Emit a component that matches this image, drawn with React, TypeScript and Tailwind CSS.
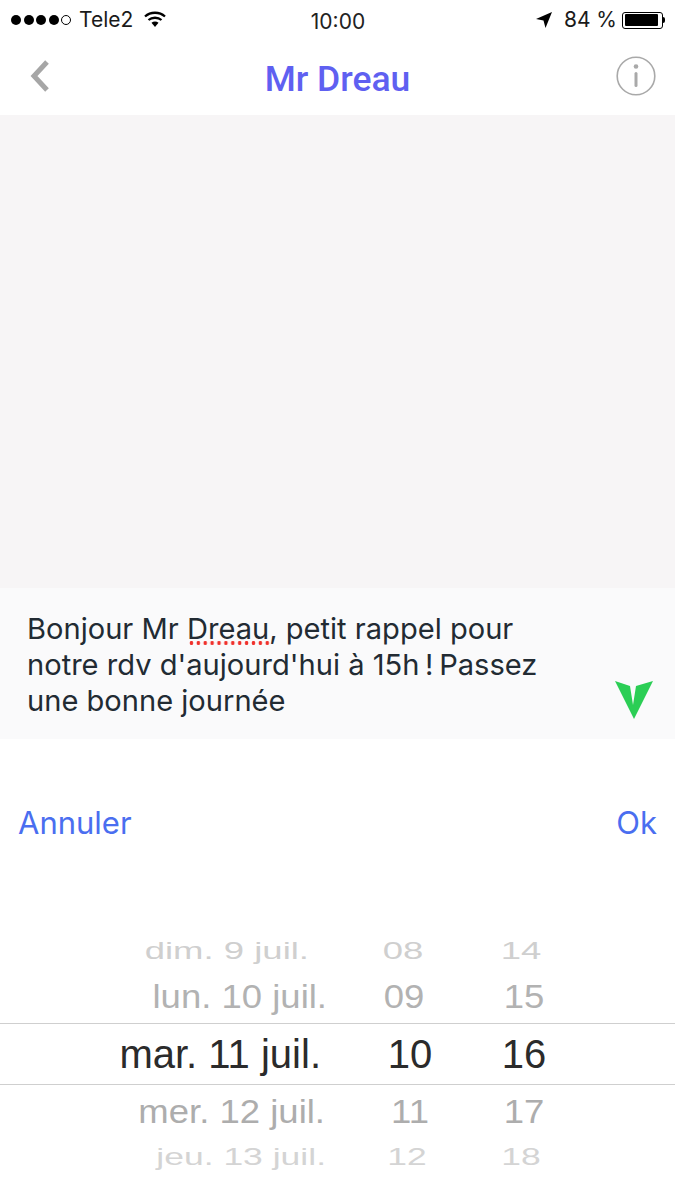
const rows = [
  { date: "dim. 9 juil.", h: "08", m: "14", row: "h-[40px] text-[#cfcfcf] text-[36.5px] scale-y-[0.66]", dp: "pr-[21px]", hp: "pr-[14px]", mp: "pr-[6px]" },
  { date: "lun. 10 juil.", h: "09", m: "15", row: "h-[52px] text-[#b2b2b2] text-[36.5px] scale-y-[0.9]", dp: "pr-[3px]", hp: "pr-[12px]", mp: "pl-0" },
  { date: "mar. 11 juil.", h: "10", m: "16", row: "h-[60px] text-[#2b2b2b] text-[40px]", dp: "pr-[9px]", hp: "pl-0", mp: "pl-0" },
  { date: "mer. 12 juil.", h: "11", m: "17", row: "h-[54px] text-[#adadad] text-[36.5px] scale-y-[0.9]", dp: "pr-[5px]", hp: "pl-0", mp: "pl-0" },
  { date: "jeu. 13 juil.", h: "12", m: "18", row: "h-[38px] text-[#d4d4d4] text-[35.5px] scale-y-[0.66]", dp: "pr-[4px]", hp: "pr-[6px]", mp: "pr-[6px]" },
];

export default function App() {
  return (
    <div className="w-[675px] h-[1200px] bg-white overflow-hidden flex flex-col font-['Inter',sans-serif]">
      <div className="h-[40px] flex items-center justify-between pl-[11px] pr-[10px] text-[21px] text-[#1a1a1a]">
        <div className="flex items-center w-[200px] h-[36px]">
          <div className="flex items-center gap-[2.5px]">
            <span className="w-[10px] h-[10px] rounded-full bg-black" />
            <span className="w-[10px] h-[10px] rounded-full bg-black" />
            <span className="w-[10px] h-[10px] rounded-full bg-black" />
            <span className="w-[10px] h-[10px] rounded-full bg-black" />
            <span className="w-[10px] h-[10px] rounded-full border border-black" />
          </div>
          <span className="ml-[8px] text-[21px]">Tele2</span>
          <svg className="ml-[11px] mb-[2px]" width="22" height="17" viewBox="0 0 22 17">
            <path d="M1 5.5 C6.5 0.5 15.5 0.5 21 5.5" fill="none" stroke="#000" strokeWidth="2.3" />
            <path d="M4.5 9 C8 6 14 6 17.5 9" fill="none" stroke="#000" strokeWidth="2.3" />
            <path d="M7.5 11.8 C9.5 10.2 12.5 10.2 14.5 11.8 L11 16 Z" fill="#000" />
          </svg>
        </div>
        <span className="text-[21px] mt-[3px] text-[#222]">10:00</span>
        <div className="flex items-center justify-end w-[200px] h-[36px]">
          <svg width="16" height="16" viewBox="0 0 16 16">
            <path d="M16 0 L0 7 L7.5 8.5 L9.5 16 Z" fill="#000" />
          </svg>
          <span className="ml-[12px] text-[21px]">84 %</span>
          <div className="ml-[5px] w-[41px] h-[17px] border border-black rounded-[3px] p-[1.5px] flex">
            <div className="w-[33px] bg-black rounded-[1px]" />
          </div>
          <div className="w-[2px] h-[6px] bg-black rounded-r-full" />
        </div>
      </div>
      <div className="h-[75px] flex items-center justify-between pl-[30px] pr-[19px]">
        <svg className="mb-[4px]" width="20" height="32" viewBox="0 0 20 32">
          <path d="M17 2 L4 16 L17 30" fill="none" stroke="#a6a6a6" strokeWidth="5" />
        </svg>
        <span className="text-[35.5px] ml-[9px] mt-[5px] font-medium text-[#5f60f1] font-['Roboto',sans-serif]">Mr Dreau</span>
        <svg className="mb-[4px]" width="40" height="40" viewBox="0 0 40 40">
          <circle cx="20" cy="20" r="18.8" fill="none" stroke="#a9a9a9" strokeWidth="1.6" />
          <circle cx="20" cy="10.5" r="2.3" fill="#a9a9a9" />
          <rect x="18.5" y="16" width="3" height="15" rx="1.5" fill="#a9a9a9" />
        </svg>
      </div>
      <div className="h-[473px] bg-[#f7f5f6]" />
      <div className="h-[151px] bg-[#fafafb] flex pl-[27px] pr-[22px] relative">
        <p className="mt-[23px] text-[29.1px] leading-[36px] text-[#222b33] whitespace-nowrap">
          Bonjour Mr{" "}
          <span className="relative">
            Dreau
            <span className="absolute left-[1px] right-[-3px] top-[30px] h-[4px] bg-[radial-gradient(circle,#f0312c_1.7px,transparent_2.1px)] bg-[length:6.9px_4px]" />
          </span>
          , petit rappel pour
          <br />
          notre rdv d'aujourd'hui à <span className="[word-spacing:-2.5px]">15h ! Passez</span>
          <br />
          une bonne journée
        </p>
        <svg className="absolute right-[22px] bottom-[20px]" width="38" height="38" viewBox="0 0 38 38">
          <path d="M0 0 L15 5 L18 24 L21 5 L38 0 L19 38 Z" fill="#2bce55" />
        </svg>
      </div>
      <div className="h-[168px] flex items-center justify-between px-[18px] text-[31px] text-[#4a6ef0]">
        <span>Annuler</span>
        <span>Ok</span>
      </div>
      <div className="mt-[24px] font-['Liberation_Sans',sans-serif]">
        {rows.map((r, i) => (
          <div key={r.date} className={i === 2 ? "border-y border-[#cfcfcf]" : ""}>
            <div className={`flex w-full items-center ${r.row}`}>
              <span className={`w-[330px] text-right whitespace-nowrap ${r.dp}`}>{r.date}</span>
              <span className={`w-[160px] text-center ${r.hp}`}>{r.h}</span>
              <span className={`w-[68px] text-center ${r.mp}`}>{r.m}</span>
            </div>
          </div>
        ))}
      </div>
    </div>
  );
}
